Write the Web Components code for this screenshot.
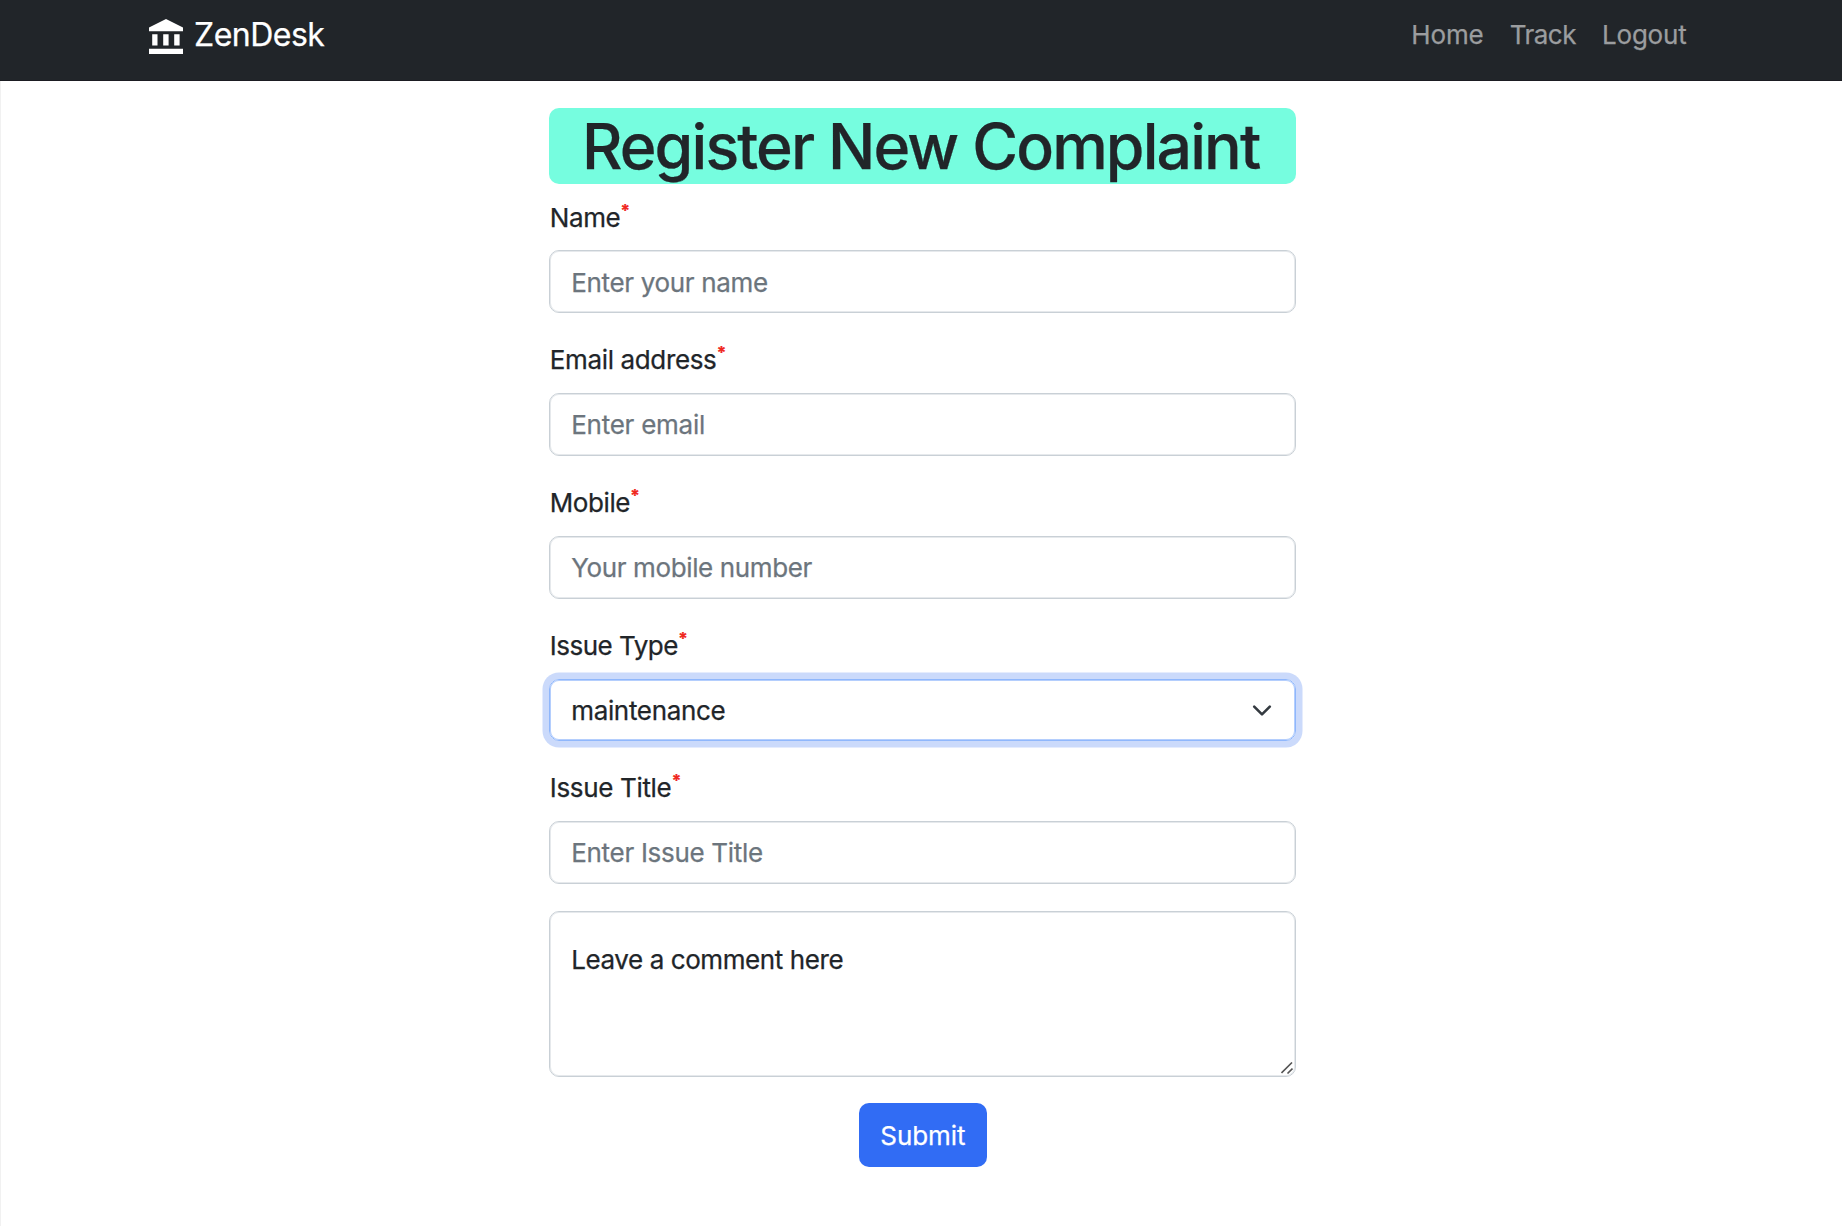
<!DOCTYPE html>
<html lang="en">
<head>
<meta charset="utf-8">
<title>ZenDesk</title>
<style>
body{margin:0;background:#fff;color:#212529;font:400 26px/1.5 Inter,"Liberation Sans",sans-serif;-webkit-text-stroke:.25px currentColor}
</style>
</head>
<body>
<complaint-page></complaint-page>
<script>
const define = (name, html) => customElements.define(name, class extends HTMLElement {
  connectedCallback() {
    if (this.shadowRoot) return;
    this.attachShadow({mode: "open"}).innerHTML = html;
  }
});

define("bank-icon", `<style>:host{display:block;width:34px;height:36px}svg{display:block}</style>
<svg width="34" height="36" viewBox="0 0 34 36" fill="#fff"><path d="M0 12.3V8.6L17 0l17 8.6v3.7zM3.2 15.2h5.3v11.3H3.2zM14.2 15.2h5.4v11.3h-5.4zM25.2 15.2h5.4v11.3h-5.4zM0 29.8h34v5.2H0z"/></svg>`);

define("nav-bar", `<style>
:host{display:flex;box-sizing:border-box;height:81px;padding:0 155.5px 0 149px;background:#212529;border-bottom:1px solid #1b1c22;justify-content:space-between}
.brand{display:flex;gap:11px;color:#fff;font-size:32px;line-height:70px;height:70px}
bank-icon{margin-top:19.3px}
nav{display:flex;gap:26px;line-height:70px;color:#9b9d9f}
</style><div class="brand"><bank-icon></bank-icon><slot name="brand"></slot></div><nav><slot></slot></nav>`);

define("page-title", `<style>
:host{display:block;box-sizing:border-box;height:76px;line-height:76px;padding-left:32.5px;border-radius:10px;background:#76fddf;font-size:62.6px;font-weight:500;white-space:nowrap}
</style><slot></slot>`);

define("form-field", `<style>
:host{display:flex;flex-direction:column;gap:12.2px}
.label{display:flex;height:41.6px;line-height:42.6px;padding-left:.4px;white-space:nowrap}
.star{color:#f0281e;font-size:17px;font-weight:700;line-height:28px;margin-left:.3px}
</style><div class="label"><slot name="label"></slot><span class="star">*</span></div><slot></slot>`);

define("text-box", `<style>
:host{display:flex;box-sizing:border-box;height:62.8px;line-height:62px;padding:1.6px 20.5px 0 20.8px;border:1px solid #c9d0d6;box-shadow:inset 0 0 0 1px #e6e9ec;border-radius:10px;color:#6c757d;white-space:nowrap;justify-content:space-between;align-items:center}
:host([focused]){border-color:#8fb7fc;color:#212529;box-shadow:inset 0 0 0 1px #b4cefd,0 0 0 6.5px #cbdafb}
svg{display:none}:host([focused]) svg{display:block}
</style><slot></slot><svg width="26" height="26" viewBox="0 0 16 16" fill="none" stroke="#343a40" stroke-width="1.6" stroke-linecap="round" stroke-linejoin="round"><path d="m3.2 5.3 4.800 4.800 4.800-4.800"/></svg>`);

define("comment-box", `<style>
:host{display:flex;box-sizing:border-box;height:166px;padding:28px 2px 2px 20.8px;border:1px solid #c9d0d6;box-shadow:inset 0 0 0 1px #e6e9ec;border-radius:10px;justify-content:space-between}
svg{align-self:flex-end}
</style><slot></slot><svg width="12" height="12" viewBox="0 0 12 12" stroke="#555" stroke-width="1.6"><path d="M.5 11 11 .5M6.5 11.5 11.5 6.5"/></svg>`);

define("submit-button", `<style>
:host{display:block;box-sizing:border-box;width:128px;height:63.5px;line-height:65px;text-align:center;background:#316cf4;color:#fff;border-radius:10px;align-self:center}
</style><slot></slot>`);

define("complaint-page", `<style>
:host{display:flex;flex-direction:column;min-height:1226px}
main{flex:1;border-left:1px solid #f1f1f1;padding:27px 0 0 548.4px}
form{display:flex;flex-direction:column;width:747px;gap:26.15px}
page-title{margin-bottom:-13.55px}
comment-box{margin-top:.8px}
</style>
<nav-bar><span slot="brand" style="letter-spacing:-.5px">ZenDesk</span><span style="letter-spacing:-.12px">Home</span><span style="letter-spacing:-.5px">Track</span><span style="letter-spacing:-.2px">Logout</span></nav-bar>
<main><form>
<page-title><span style="letter-spacing:-1.88px">Register New Complaint</span></page-title>
<form-field><span slot="label" style="letter-spacing:-.4px">Name</span><text-box><span style="letter-spacing:-.33px">Enter your name</span></text-box></form-field>
<form-field><span slot="label" style="letter-spacing:-.36px">Email address</span><text-box><span style="letter-spacing:-.26px">Enter email</span></text-box></form-field>
<form-field><span slot="label" style="letter-spacing:-.42px">Mobile</span><text-box><span style="letter-spacing:-.37px">Your mobile number</span></text-box></form-field>
<form-field><span slot="label" style="letter-spacing:-.5px">Issue Type</span><text-box focused><span style="letter-spacing:-.33px">maintenance</span></text-box></form-field>
<form-field><span slot="label" style="letter-spacing:-.34px">Issue Title</span><text-box><span style="letter-spacing:-.3px">Enter Issue Title</span></text-box></form-field>
<comment-box><span style="letter-spacing:-.41px">Leave a comment here</span></comment-box>
<submit-button><span style="letter-spacing:-.06px">Submit</span></submit-button>
</form></main>`);
</script>
</body>
</html>
